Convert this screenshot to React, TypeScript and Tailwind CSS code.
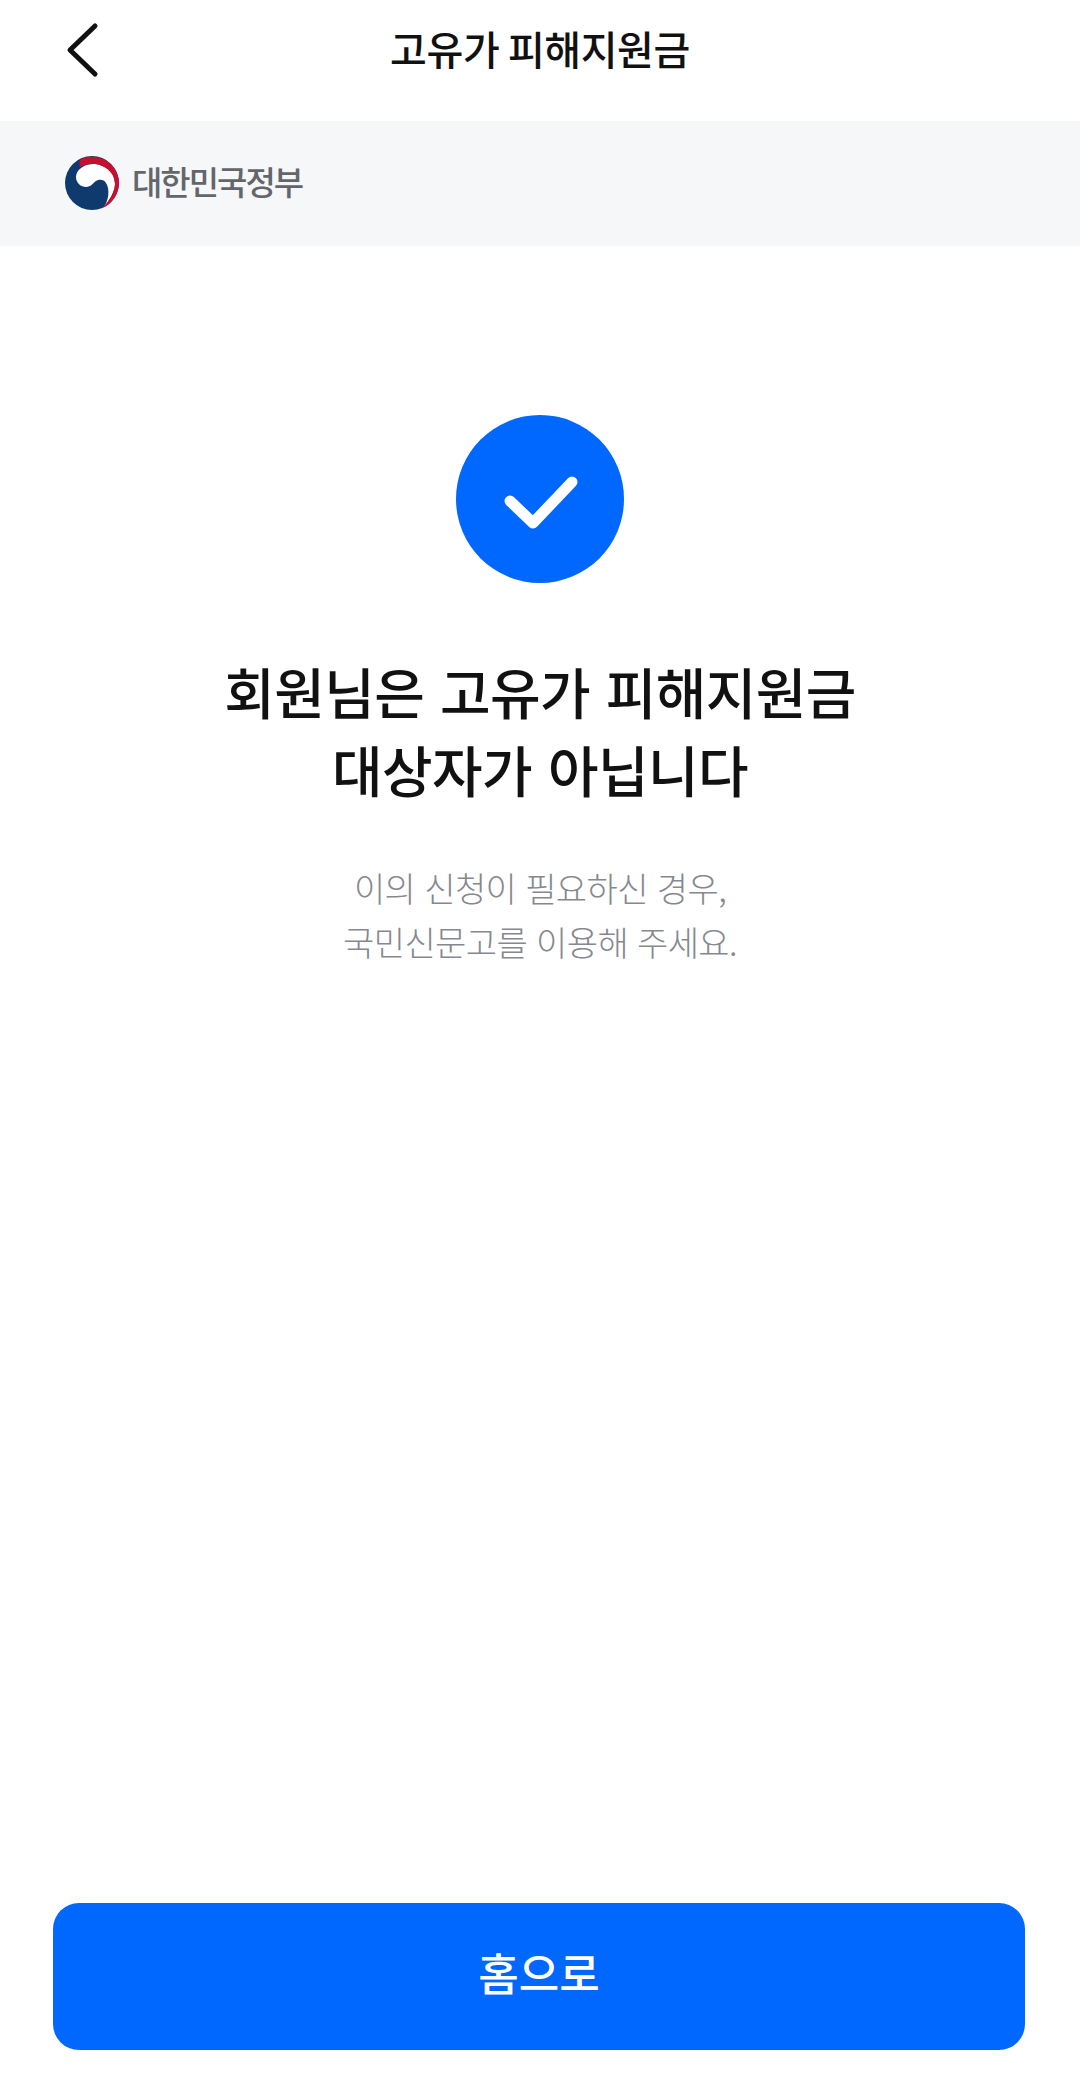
const fontStack = { fontFamily: '"Noto Sans CJK KR", "Noto Sans", sans-serif' };

function GovLogo() {
  return (
    <svg width="56" height="56" viewBox="0 0 56 56" className="shrink-0">
      <circle cx="28" cy="28" r="27" fill="#0f3a6e" />
      <path d="M39 53C46 45 51 36 51 29C51 17 40 9 29 9C20 9 12 15 12 22C12 28 17 32 22 32C27 32 29 28 32 26C35 24 40 24 42 28C46 34 45 46 39 53Z" fill="#ffffff" />
      <path d="M17 4A27 27 0 0 1 55 28C55 38 49 48 39 53C46 45 51 36 51 29C51 17 40 9 29 9C24 9 20 10 16 12C15 9 15 7 17 4Z" fill="#c8102e" />
    </svg>
  );
}

export default function App() {
  return (
    <div className="w-[1080px] h-[2090px] bg-white flex flex-col text-[#111111]" style={fontStack}>
      {/* top bar */}
      <header className="relative h-[121px] shrink-0 flex items-center justify-center pb-[26px]">
        <svg className="absolute left-[60px] top-[18px]" width="44" height="64" viewBox="0 0 44 64" fill="none">
          <path d="M35 8L10 32L35 56" stroke="#111111" strokeWidth="5" strokeLinecap="round" strokeLinejoin="round" />
        </svg>
        <h1 className="text-[40px] font-medium leading-none tracking-[-0.4px]">고유가 피해지원금</h1>
      </header>

      {/* government banner */}
      <div className="h-[125px] shrink-0 bg-[#f6f7f9] flex items-center pl-[64px] gap-[12px] pb-[2px]">
        <GovLogo />
        <span className="text-[33px] font-medium text-[#63666b] leading-none tracking-[-2px] pb-[2px]">대한민국정부</span>
      </div>

      {/* result */}
      <main className="flex-1 flex flex-col items-center pt-[169px]">
        <div className="w-[168px] h-[168px] rounded-full bg-[#0068ff] flex items-center justify-center">
          <svg width="76" height="60" viewBox="0 0 76 60" fill="none">
            <path d="M8 32L31 54L70 13" stroke="#ffffff" strokeWidth="11" strokeLinecap="round" strokeLinejoin="round" />
          </svg>
        </div>
        <h2 className="mt-[68px] text-[55px] font-medium leading-[78px] text-center tracking-[-0.6px] [word-spacing:4px]">
          회원님은 고유가 피해지원금
          <br />
          대상자가 아닙니다
        </h2>
        <p className="mt-[54px] text-[34px] leading-[54px] text-center text-[#85888f] font-light tracking-[-0.6px] [word-spacing:2px]">
          이의 신청이 필요하신 경우,
          <br />
          국민신문고를 이용해 주세요.
        </p>
      </main>

      {/* home button */}
      <div className="shrink-0 pl-[53px] pr-[55px] pb-[40px]">
        <button className="w-full h-[147px] rounded-[26px] bg-[#0068ff] text-white text-[44px] font-medium leading-none pb-[9px]">
          홈으로
        </button>
      </div>
    </div>
  );
}
